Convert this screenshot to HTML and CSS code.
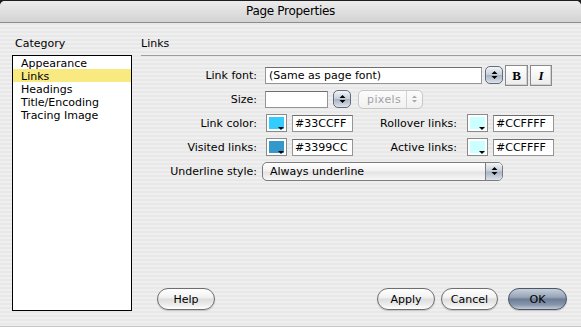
FILE: index.html
```html
<!DOCTYPE html>
<html>
<head>
    <title>Page Properties</title>
    <link rel="stylesheet" href="styles.css">
</head>
<body>
    <div class="window">
        <div class="titlebar">Page Properties</div>
        <div class="content">
            <div class="sidebar">
                <div class="section-label category-label">Category</div>
                <ul class="category-list">
                    <li>Appearance</li>
                    <li class="selected">Links</li>
                    <li>Headings</li>
                    <li>Title/Encoding</li>
                    <li>Tracing Image</li>
                </ul>
            </div>
            <div class="panel">
                <div class="section-label panel-title">Links</div>
                <div class="form">
                    <div class="form-row">
                        <label class="row-label">Link font:</label>
                        <input class="text-field font-field" type="text" value="(Same as page font)">
                        <span class="stepper"><svg width="7" height="10" viewBox="0 0 7 10"><path d="M0.5 4 L3.5 1 L6.5 4Z M0.5 6 L3.5 9 L6.5 6Z" fill="#000"/></svg></span>
                        <button class="style-button bold">B</button>
                        <button class="style-button italic">I</button>
                    </div>

                    <div class="form-row">
                        <label class="row-label">Size:</label>
                        <input class="text-field size-field" type="text" value="">
                        <span class="stepper size-stepper"><svg width="7" height="10" viewBox="0 0 7 10"><path d="M0.5 4 L3.5 1 L6.5 4Z M0.5 6 L3.5 9 L6.5 6Z" fill="#000"/></svg></span>
                        <div class="popup disabled units-popup">
                            <span class="popup-text">pixels</span>
                            <span class="popup-arrows"><svg width="7" height="10" viewBox="0 0 7 10"><path d="M1 4 L3.5 1.5 L6 4Z M1 6 L3.5 8.5 L6 6Z" fill="#a8a8a8"/></svg></span>
                        </div>
                    </div>

                    <div class="form-row">
                        <label class="row-label">Link color:</label>
                        <span class="swatch"><span class="swatch-fill link-color"></span></span>
                        <input class="text-field hex-field" type="text" value="#33CCFF">
                        <label class="row-label second-label">Rollover links:</label>
                        <span class="swatch"><span class="swatch-fill pale-color"></span></span>
                        <input class="text-field hex-field" type="text" value="#CCFFFF">
                    </div>

                    <div class="form-row">
                        <label class="row-label">Visited links:</label>
                        <span class="swatch"><span class="swatch-fill visited-color"></span></span>
                        <input class="text-field hex-field" type="text" value="#3399CC">
                        <label class="row-label second-label">Active links:</label>
                        <span class="swatch"><span class="swatch-fill pale-color"></span></span>
                        <input class="text-field hex-field" type="text" value="#CCFFFF">
                    </div>

                    <div class="form-row">
                        <label class="row-label">Underline style:</label>
                        <div class="popup underline-popup">
                            <span class="popup-text">Always underline</span>
                            <span class="popup-arrows"><svg width="7" height="10" viewBox="0 0 7 10"><path d="M0.5 4 L3.5 1 L6.5 4Z M0.5 6 L3.5 9 L6.5 6Z" fill="#000"/></svg></span>
                        </div>
                    </div>
                </div>

                <div class="footer">
                    <button class="aqua-button help-button">Help</button>
                    <div class="spacer"></div>
                    <button class="aqua-button apply-button">Apply</button>
                    <button class="aqua-button cancel-button">Cancel</button>
                    <button class="aqua-button ok-button">OK</button>
                </div>
            </div>
        </div>
    </div>
</body>
</html>
```

FILE: styles.css
```css
html,
body {
    margin: 0;
    padding: 0;
}

body {
    width: 581px;
    height: 327px;
    overflow: hidden;
    background-color: #1e1e1e;
    font-family: "DejaVu Sans", sans-serif;
    font-size: 11px;
    color: #000;
}

.window {
    height: 326px;
    margin-top: 1px;
    border-radius: 5px 5px 0 0;
    overflow: hidden;
    display: flex;
    flex-direction: column;
    background: repeating-linear-gradient(#efefef 0 2px, #e8e8e8 2px 4px);
}

.titlebar {
    height: 21px;
    line-height: 21px;
    border-bottom: 1px solid #8c8c8c;
    background: linear-gradient(#ececec, #d3d3d3);
    text-align: center;
    font-size: 12px;
    letter-spacing: -0.3px;
}

.content {
    flex: 1;
    display: flex;
    border-bottom: 1px solid #c4c4c4;
}

/* left column */

.sidebar {
    width: 129px;
    padding: 14px 0 0 12px;
    flex-shrink: 0;
}

.section-label {
    height: 13px;
    line-height: 13px;
}

.category-label {
    padding-left: 3px;
}

.category-list {
    box-sizing: border-box;
    width: 120px;
    height: 256px;
    margin: 5px 0 0;
    padding: 0;
    list-style: none;
    border: 1px solid #000;
    background-color: #fff;
}

.category-list li {
    height: 13px;
    line-height: 15px;
    padding-left: 8px;
}

.category-list .selected {
    background-color: #f8ea80;
}

/* right panel */

.panel {
    flex: 1;
    display: flex;
    flex-direction: column;
    padding-top: 14px;
}

.panel-title {
    height: 18px;
    border-bottom: 1px solid #9c9c9c;
}

.form {
    margin-top: 7px;
}

.form-row {
    height: 24px;
    display: flex;
    align-items: center;
}

.row-label {
    width: 116px;
    margin-right: 8px;
    flex-shrink: 0;
    text-align: right;
}

.second-label {
    width: 104px;
    margin-right: 9px;
}

.text-field {
    box-sizing: border-box;
    height: 17px;
    margin: 0;
    padding: 0 3px;
    border: 1px solid #959595;
    border-top-color: #6e6e6e;
    background-color: #fff;
    font: 11px "DejaVu Sans", sans-serif;
    color: #000;
}

.font-field {
    width: 217px;
}

.size-field {
    width: 63px;
}

.hex-field {
    width: 61px;
    margin-left: 5px;
    padding: 0 2px;
}

.stepper {
    box-sizing: border-box;
    width: 18px;
    height: 18px;
    margin-left: 3px;
    display: flex;
    align-items: center;
    justify-content: center;
    border: 1px solid #5f6a7e;
    border-radius: 5px;
    background: linear-gradient(#f2f4f7, #c6ced9 48%, #a7b2c3 52%, #dbe1ea);
    box-shadow: inset 0 0 1px #ffffff;
}

.size-stepper {
    margin-left: 5px;
}

.style-button {
    box-sizing: border-box;
    width: 22px;
    height: 21px;
    margin-left: 2px;
    padding: 0;
    border: 1px solid #8a8a8a;
    background: linear-gradient(#ffffff, #ececec);
    box-shadow: inset -1px -1px 0 #d0d0d0;
    font-family: "Liberation Serif", serif;
    font-weight: bold;
    font-size: 13px;
    line-height: 19px;
}

.bold {
    width: 23px;
}

.italic {
    font-style: italic;
}

.popup {
    box-sizing: border-box;
    height: 19px;
    display: flex;
    border: 1px solid #7c7c7c;
    border-radius: 5px;
    overflow: hidden;
    background: linear-gradient(#ffffff, #f1f1f1 48%, #e3e3e3 52%, #f7f7f7);
}

.popup-text {
    flex: 1;
    padding-left: 7px;
    line-height: 17px;
}

.popup-arrows {
    width: 16px;
    display: flex;
    align-items: center;
    justify-content: center;
    border-left: 1px solid #7c7c7c;
    background: linear-gradient(#f2f4f7, #c6ced9 48%, #a7b2c3 52%, #dbe1ea);
}

.underline-popup {
    width: 241px;
    margin-left: -3px;
}

.units-popup {
    width: 65px;
    margin-left: 7px;
}

.disabled {
    border-color: #c6c6c6;
    color: #a2a2a2;
    background: linear-gradient(#fbfbfb, #f1f1f1);
}

.disabled .popup-text {
    padding-left: 8px;
    letter-spacing: 0.4px;
}

.disabled .popup-arrows {
    width: 15px;
    border-left-color: #d2d2d2;
    background: none;
}

.swatch {
    position: relative;
    box-sizing: border-box;
    width: 21px;
    height: 18px;
    margin-left: 1px;
    padding: 2px;
    border: 1px solid #8a8a8a;
    background-color: #fff;
}

.swatch-fill {
    display: block;
    height: 100%;
}

/* little dropdown triangle in the corner of each colour well */
.swatch::after {
    content: "";
    position: absolute;
    right: 2px;
    bottom: 1px;
    border-left: 3px solid transparent;
    border-right: 3px solid transparent;
    border-top: 3px solid #000;
}

.link-color {
    background-color: #33ccff;
}

.visited-color {
    background-color: #3399cc;
}

.pale-color {
    background-color: #ccffff;
}

/* bottom buttons */

.footer {
    margin-top: auto;
    display: flex;
    align-items: center;
    padding: 0 14px 16px 16px;
}

.spacer {
    flex: 1;
}

.aqua-button {
    box-sizing: border-box;
    height: 22px;
    padding: 0;
    border: 1px solid #6e6e6e;
    border-radius: 11px;
    background: linear-gradient(#ffffff 0%, #f3f3f3 40%, #dedede 52%, #ececec 78%, #ffffff 100%);
    box-shadow: 0 1px 1px rgba(0, 0, 0, 0.18);
    font: 11px "DejaVu Sans", sans-serif;
    color: #000;
}

.help-button {
    width: 58px;
}

.apply-button {
    width: 58px;
}

.cancel-button {
    width: 57px;
    margin-left: 6px;
}

.ok-button {
    width: 59px;
    margin-left: 10px;
    border-color: #4c5667;
    background: linear-gradient(#c6ced9 0%, #98a5b8 40%, #6e7e97 52%, #8795ab 78%, #c0cad7 100%);
}
```
